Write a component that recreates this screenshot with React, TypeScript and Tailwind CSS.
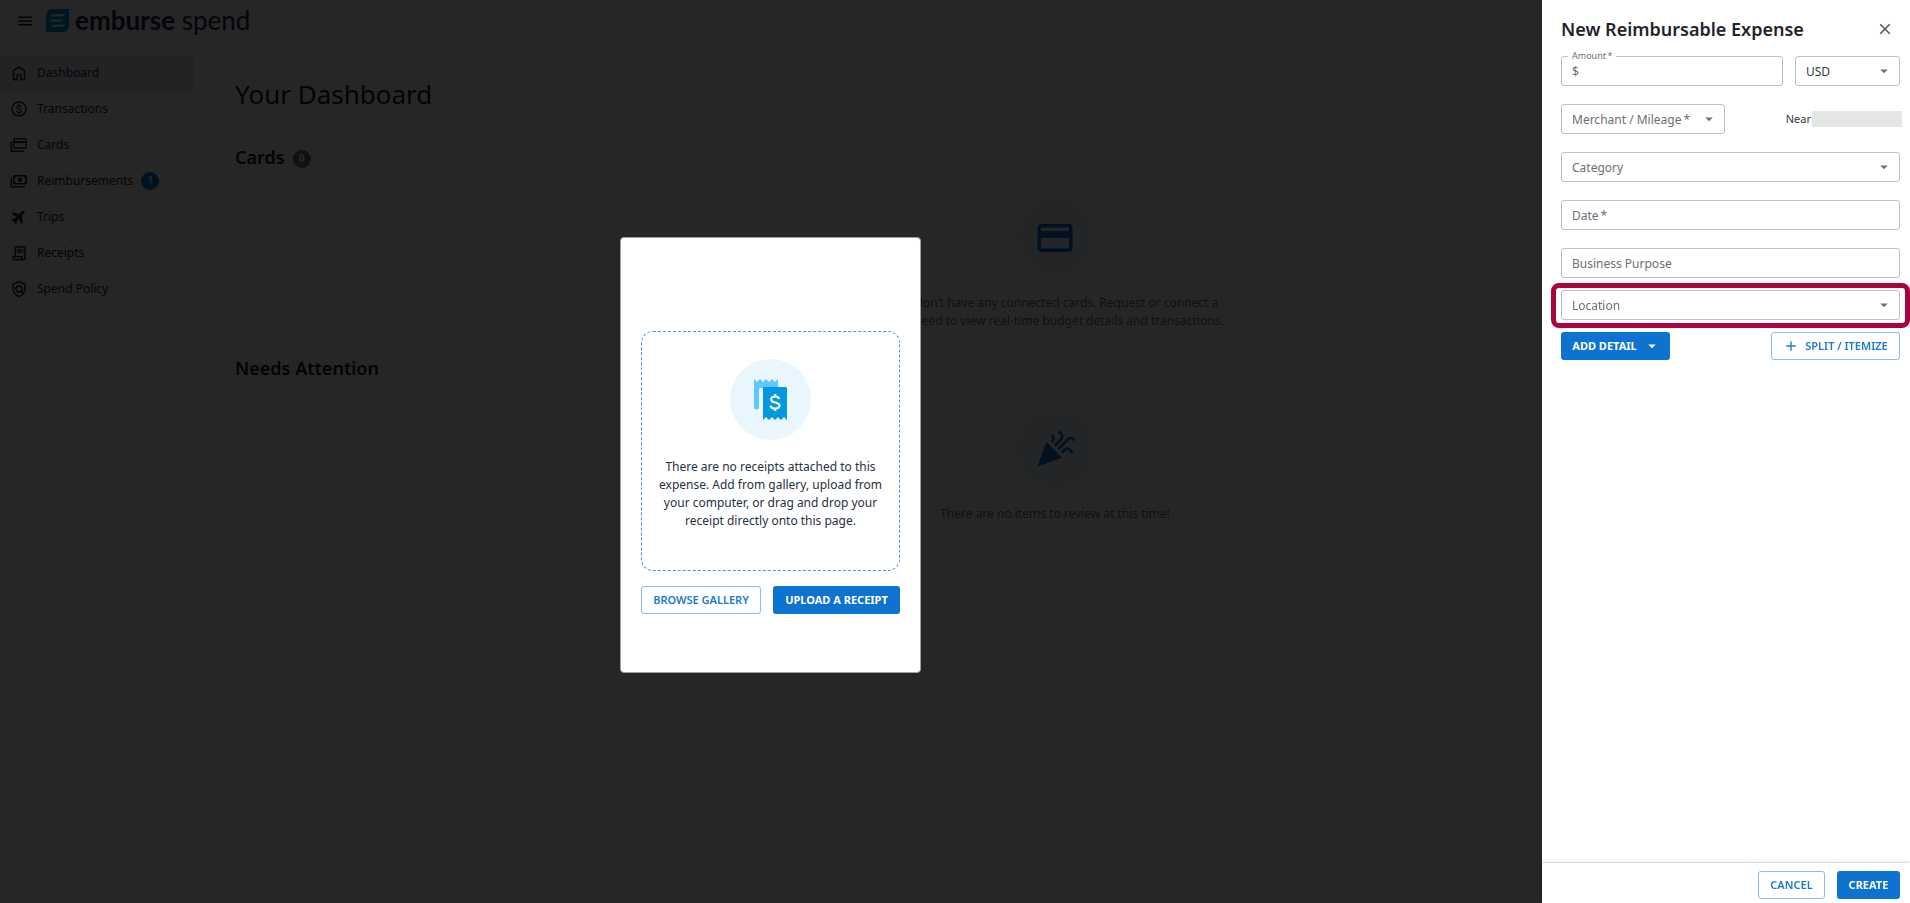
import { ReactNode } from "react";
import {
  MdArrowDropDown,
  MdAdd,
  MdMenu,
  MdClose,
  MdCreditCard,
  MdCelebration,
  MdOutlinePolicy,
  MdOutlineReceiptLong,
} from "react-icons/md";

interface NavItem {
  label: string;
  icon: ReactNode;
  badge?: number;
  active?: boolean;
}

function HomeIcon() {
  return (
    <svg viewBox="0 0 20 20" className="size-5" fill="none" stroke="currentColor" strokeWidth="1.5" strokeLinejoin="round">
      <path d="M4.500 7.800 10 3.800l5.500 4V16a.8.8 0 0 1-.8.8h-2.700V12.500a.8.8 0 0 0-.8-.8H8.800a.8.8 0 0 0-.8.8v4.300H5.300a.8.8 0 0 1-.8-.8z" />
    </svg>
  );
}

function DollarIcon() {
  return (
    <svg viewBox="0 0 20 20" className="size-5" fill="none" stroke="currentColor" strokeWidth="1.5">
      <circle cx="10" cy="10" r="7" />
      <path d="M12.200 8.200c-.2-1-1.100-1.500-2.200-1.500-1.300 0-2.200.6-2.200 1.600 0 2.300 4.500 1 4.500 3.400 0 1-1 1.700-2.300 1.700s-2.200-.6-2.400-1.700M10 5.200v1.500M10 13.300v1.500" strokeWidth="1.300" />
    </svg>
  );
}

function CardsIcon() {
  return (
    <svg viewBox="0 0 20 20" className="size-5" fill="none" stroke="currentColor" strokeWidth="1.5">
      <rect x="4.700" y="3.700" width="12.600" height="9.300" rx="1" />
      <path d="M4.700 7.200h12.600" strokeWidth="2" />
      <path d="M2.200 6.500v9.700h13" />
    </svg>
  );
}

function CashIcon() {
  return (
    <svg viewBox="0 0 20 20" className="size-5" fill="none" stroke="currentColor" strokeWidth="1.5">
      <rect x="4.700" y="4.700" width="12.600" height="8" rx="1" />
      <path d="M4.700 6.500a2 2 0 0 0 2-1.800M17.300 6.500a2 2 0 0 1-2-1.800M4.700 11a2 2 0 0 1 2 1.700M17.300 11a2 2 0 0 0-2 1.700" />
      <circle cx="11" cy="8.700" r="2.200" fill="currentColor" stroke="none" />
      <path d="M2.200 6.500v9.200h13.800" />
    </svg>
  );
}

function PlaneIcon() {
  return (
    <svg viewBox="0 0 24 24" className="mx-px size-[18px] rotate-45" fill="currentColor" stroke="currentColor" strokeLinejoin="round">
      <path d="M20.500 15.800v-2L13.300 9V4c0-1-.8-1.800-1.800-1.800S9.700 3 9.700 4v5l-7.200 4.800v2l7.200-2.300v5l-2 1.500v1.500l3.800-1 3.800 1V20l-2-1.500v-5z" />
    </svg>
  );
}

const NAV: NavItem[] = [
  { label: "Dashboard", icon: <HomeIcon />, active: true },
  { label: "Transactions", icon: <DollarIcon /> },
  { label: "Cards", icon: <CardsIcon /> },
  { label: "Reimbursements", icon: <CashIcon />, badge: 1 },
  { label: "Trips", icon: <PlaneIcon /> },
  { label: "Receipts", icon: <MdOutlineReceiptLong className="mx-px size-[18px]" /> },
  { label: "Spend Policy", icon: <MdOutlinePolicy className="mx-px size-[18px]" /> },
];

function Logo() {
  return (
    <div className="flex items-center gap-1.5 text-[#14284b]">
      <svg viewBox="0 0 23 23" className="size-[23px]">
        <path d="M6 0h17v17a6 6 0 0 1-6 6H0V6a6 6 0 0 1 6-6z" fill="#009bde" />
        <path
          d="M7 5.200h12c-.4 1.300-1.200 2-2.600 2H5c.2-1.200.9-2 2-2zM6 10.500h11c-.4 1.300-1.200 2-2.600 2H4c.2-1.200.9-2 2-2zM7 15.800h12c-.4 1.300-1.200 2-2.600 2H5c.2-1.200.9-2 2-2z"
          fill="#fff"
        />
      </svg>
      <span className="font-['Lato',sans-serif] text-[26px] leading-8">
        <span className="font-bold">emburse</span> spend
      </span>
    </div>
  );
}

function Sidebar() {
  return (
    <nav className="w-[194px] shrink-0 border-r border-gray-200 pt-[7px]">
      {NAV.map((item) => (
        <a
          key={item.label}
          href="#"
          className={`flex h-9 items-center gap-2 pl-[9px] text-xs text-[#20262e] ${item.active ? "bg-[#e3ecf6]" : ""}`}
        >
          {item.icon}
          {item.label}
          {item.badge && (
            <span className="flex size-[18px] items-center justify-center rounded-full bg-[#0e73d0] text-[10px] font-semibold text-white">
              {item.badge}
            </span>
          )}
        </a>
      ))}
    </nav>
  );
}

function EmptyState({ icon, children }: { icon: ReactNode; children: ReactNode }) {
  return (
    <div className="mt-[26px] flex flex-col items-center">
      <div className="flex size-[81px] items-center justify-center rounded-full bg-[#eaf6fd] text-[#0e73d0]">{icon}</div>
      <p className="mt-4 text-center text-xs leading-[18px] text-[#6b7280]">{children}</p>
    </div>
  );
}

function Dashboard() {
  return (
    <main className="flex-1 pl-[41px] pr-[35px] pt-[26px]">
      <h1 className="text-[26px] leading-10">Your Dashboard</h1>
      <h2 className="mt-[29px] flex h-7 items-center gap-2 text-lg font-semibold">
        Cards
        <span className="mt-1 flex size-[18px] items-center justify-center rounded-full bg-[#6b7280] text-[10px] font-bold text-white">0</span>
      </h2>
      <EmptyState icon={<MdCreditCard className="size-[42px]" />}>
        You don’t have any connected cards. Request or connect a
        <br />
        card need to view real-time budget details and transactions.
      </EmptyState>
      <h2 className="mt-6 flex h-7 items-center text-lg font-semibold">Needs Attention</h2>
      <EmptyState icon={<MdCelebration className="size-[42px]" />}>There are no items to review at this time!</EmptyState>
    </main>
  );
}

function ReceiptIcon() {
  return (
    <svg viewBox="0 0 33 42" className="h-[42px] w-[33px]">
      <path d="M0 0l3 3 3-3 3 3 3-3 3 3 3-3 3 3 3-3v9H6.500a1.500 1.500 0 0 0-1.500 1.500V28a2.500 2.500 0 0 1-5 0z" fill="#61c8ff" />
      <path d="M9 8h22.500a1.500 1.500 0 0 1 1.500 1.500V41l-3-3-3 3-3-3-3 3-3-3-3 3-3-3-3 3z" fill="#0398e2" />
      <path d="M25.200 20c-.4-1.700-1.900-2.500-4-2.500-2.300 0-4 1.100-4 2.900 0 4.200 8.300 2 8.300 6.200 0 1.900-1.800 3-4.300 3-2.400 0-4.200-1-4.500-3M21.200 15v2.500M21.200 29.600V32" fill="none" stroke="#fff" strokeWidth="2.200" />
    </svg>
  );
}

const outlined =
  "flex items-center justify-center rounded-[3px] border border-[#8bbce9] bg-white text-[11px] font-semibold uppercase text-[#2079cf]";
const contained = "flex items-center justify-center rounded-[3px] bg-[#0e73d0] text-[11px] font-bold uppercase text-white";

function ReceiptModal() {
  return (
    <section className="absolute left-[620px] top-[237px] w-[301px] rounded-[4px] border border-gray-400 bg-white px-5 pb-[58px] pt-[93px]">
      <div className="flex h-60 flex-col items-center rounded-xl border border-dashed border-[#4596dc] pt-[27px]">
        <div className="flex size-[81px] items-center justify-center rounded-full bg-[#eaf6fd]">
          <ReceiptIcon />
        </div>
        <p className="mt-[18px] w-[236px] text-center text-xs leading-[18px] text-[#273142]">
          There are no receipts attached to this expense. Add from gallery, upload from your computer, or drag and drop your
          receipt directly onto this page.
        </p>
      </div>
      <div className="mt-[15px] flex justify-between">
        <button type="button" className={`${outlined} h-7 w-[120px]`}>Browse Gallery</button>
        <button type="button" className={`${contained} h-7 w-[127px]`}>Upload a Receipt</button>
      </div>
    </section>
  );
}

const field =
  "h-[30px] w-full appearance-none rounded-[3px] border border-[#bfbfbf] bg-white px-2.5 pt-px text-xs placeholder:text-[#6b6f76] placeholder:opacity-100";

interface SelectFieldProps {
  label: string;
  value: string;
  className?: string;
  muted?: boolean;
}

function SelectField({ label, value, className = "", muted = true }: SelectFieldProps) {
  return (
    <div className={`relative ${className}`}>
      <select aria-label={label} className={`${field} ${muted ? "text-[#6b6f76]" : "text-[#33373d]"}`}>
        <option>{value}</option>
      </select>
      <MdArrowDropDown className="pointer-events-none absolute right-[7px] top-[6px] size-[18px] text-[#6f6f6f]" />
    </div>
  );
}

function ExpenseDrawer() {
  return (
    <aside className="fixed inset-y-0 right-0 flex w-[368px] flex-col bg-white">
      <div className="flex-1 pl-[19px] pr-2.5">
        <header className="flex h-14 items-center justify-between pr-1.5 pt-px">
          <h2 className="text-lg font-semibold text-[#1f242b]">New Reimbursable Expense</h2>
          <button type="button" aria-label="Close" className="text-[#555]">
            <MdClose className="size-[18px]" />
          </button>
        </header>
        <form>
          <div className="flex gap-3">
            <div className="relative flex-1">
              <label htmlFor="amount" className="absolute -top-1.5 left-[7px] bg-white px-1 text-[9px] leading-3 text-[#6b6f76]">
                Amount{"\u2009"}*
              </label>
              <input id="amount" placeholder="$" className={field} />
            </div>
            <SelectField label="Currency" value="USD" className="w-[105px]" muted={false} />
          </div>
          <div className="mt-[18px] flex items-center justify-between">
            <SelectField label="Merchant" value={"Merchant / Mileage\u2009*"} className="w-[164px]" />
            <div className="-mr-0.5 flex items-center gap-px text-[11px] text-[#33373d]">
              Near <span className="h-4 w-[90px] bg-[#e4e5e5]" />
            </div>
          </div>
          <SelectField label="Category" value="Category" className="mt-[18px]" />
          <input aria-label="Date" placeholder={"Date\u2009*"} className={`${field} mt-[18px]`} />
          <input aria-label="Business Purpose" placeholder="Business Purpose" className={`${field} mt-[18px]`} />
          <div className="-mx-2.5 mt-[5px] rounded-lg border-[5px] border-[#ab0340] px-[5px] pb-[3px] pt-[2px]">
            <SelectField label="Location" value="Location" />
          </div>
          <div className="mt-1 flex justify-between">
            <button type="button" className={`${contained} h-7 w-[109px] gap-1.5 pl-0.5`}>
              Add Detail <MdArrowDropDown className="size-[18px]" />
            </button>
            <button type="button" className={`${outlined} h-7 w-[129px] gap-1.5`}>
              <MdAdd className="size-4" /> Split / Itemize
            </button>
          </div>
        </form>
      </div>
      <footer className="flex h-10 items-start justify-end gap-3 pr-2.5 pt-2 shadow-[0_0_3px_rgba(0,0,0,0.35)]">
        <button type="button" className={`${outlined} h-7 w-[67px]`}>Cancel</button>
        <button type="button" className={`${contained} h-7 w-[63px]`}>Create</button>
      </footer>
    </aside>
  );
}

export default function App() {
  return (
    <div className="relative flex min-h-screen flex-col bg-white font-['Noto_Sans',sans-serif] text-[#14171c]">
      <header className="flex h-12 items-start gap-3 border-b border-gray-200 pl-4 pt-1">
        <button type="button" aria-label="Menu" className="pt-2">
          <MdMenu className="size-[18px]" />
        </button>
        <Logo />
      </header>
      <div className="flex flex-1">
        <Sidebar />
        <Dashboard />
      </div>
      <div className="fixed inset-0 bg-black/85" />
      <ReceiptModal />
      <ExpenseDrawer />
    </div>
  );
}
